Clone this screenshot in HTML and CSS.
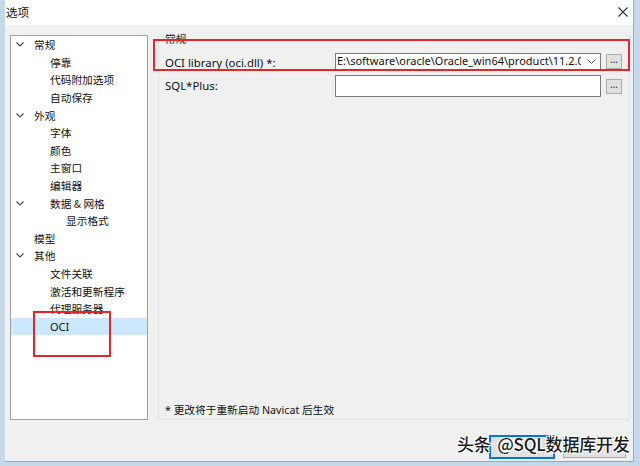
FILE: index.html
```html
<!DOCTYPE html>
<html lang="zh">
<head>
<meta charset="utf-8">
<link rel="stylesheet" href="styles.css">
</head>
<body>
<div class="desk">
  <div class="window">
    <div class="titlebar">
      <span class="title">选项</span>
      <svg class="close" width="10" height="10" viewBox="0 0 10 10"><path d="M0.5 0.5 L9.5 9.5 M9.5 0.5 L0.5 9.5" stroke="#333" stroke-width="1.1" fill="none"/></svg>
    </div>
    <div class="main">
      <div class="tree">
        <div class="row l1"><svg class="chev" width="8" height="5" viewBox="0 0 8 5"><path d="M0.5 0.5 L4 4 L7.5 0.5" stroke="#444" stroke-width="1.1" fill="none"/></svg>常规</div>
        <div class="row l2">停靠</div>
        <div class="row l2">代码附加选项</div>
        <div class="row l2">自动保存</div>
        <div class="row l1"><svg class="chev" width="8" height="5" viewBox="0 0 8 5"><path d="M0.5 0.5 L4 4 L7.5 0.5" stroke="#444" stroke-width="1.1" fill="none"/></svg>外观</div>
        <div class="row l2">字体</div>
        <div class="row l2">颜色</div>
        <div class="row l2">主窗口</div>
        <div class="row l2">编辑器</div>
        <div class="row l2"><svg class="chev" width="8" height="5" viewBox="0 0 8 5"><path d="M0.5 0.5 L4 4 L7.5 0.5" stroke="#444" stroke-width="1.1" fill="none"/></svg>数据 &amp; 网格</div>
        <div class="row l3">显示格式</div>
        <div class="row l1">模型</div>
        <div class="row l1"><svg class="chev" width="8" height="5" viewBox="0 0 8 5"><path d="M0.5 0.5 L4 4 L7.5 0.5" stroke="#444" stroke-width="1.1" fill="none"/></svg>其他</div>
        <div class="row l2">文件关联</div>
        <div class="row l2">激活和更新程序</div>
        <div class="row l2">代理服务器</div>
        <div class="row l2 sel">OCI</div>
      </div>
      <div class="panel">
        <div class="group">常规</div>
        <div class="form">
          <div class="lbl">OCI library (oci.dll) *:</div>
          <div class="combo"><span class="val">E:\software\oracle\Oracle_win64\product\11.2.0\</span><svg class="dd" width="9" height="5" viewBox="0 0 9 5"><path d="M0.5 0.5 L4.5 4.5 L8.5 0.5" stroke="#555" stroke-width="1" fill="none"/></svg></div>
          <div class="dots b1">...</div>
          <div class="lbl l2nd">SQL*Plus:</div>
          <div class="input"></div>
          <div class="dots b2">...</div>
        </div>
        <div class="note">* 更改将于重新启动 Navicat 后生效</div>
      </div>
    </div>
    <div class="footer">
      <div class="btn ok"></div>
      <div class="btn cancel"></div>
    </div>
  </div>
  <div class="mark mark1"></div>
  <div class="mark mark2"></div>
  <div class="wm">头条 @SQL数据库开发</div>
</div>
</body>
</html>
```
FILE: styles.css
```css
html, body {
  margin: 0;
  padding: 0;
  width: 640px;
  height: 466px;
  overflow: hidden;
  background: #c4d8ea;
  font-family: "Noto Sans", "Noto Sans CJK SC", sans-serif;
  color: #111;
}
.desk {
  position: relative;
  width: 640px;
  height: 466px;
  padding-left: 5px;
  box-sizing: border-box;
}
.window {
  width: 629px;
  height: 462px;
  background: #f0f0f0;
  border-right: 1px solid #9aa7b4;
  border-bottom: 1px solid #9aa7b4;
  box-sizing: border-box;
  display: flex;
  flex-direction: column;
}
.titlebar {
  height: 23px;
  background: #fff;
  display: flex;
  align-items: center;
  justify-content: space-between;
  padding: 0 5px 2px 1px;
  flex: none;
}
.title {
  font-size: 11.5px;
  font-family: "Noto Sans CJK SC", sans-serif;
}
.main {
  display: flex;
  gap: 10px;
  padding: 10px 3px 0 5px;
  height: 385px;
  flex: none;
}
.tree {
  width: 138px;
  background: #fff;
  border: 1px solid #a0a0a0;
  box-sizing: border-box;
  padding-top: 0;
  flex: none;
}
.row {
  height: 17.6px;
  display: flex;
  align-items: center;
  font-size: 10.7px;
  font-family: "Noto Sans CJK SC", sans-serif;
  color: #111;
}
.row.l1 { padding-left: 23px; }
.row.l2 { padding-left: 39px; }
.row.l3 { padding-left: 55px; }
.row .chev {
  margin-left: -18px;
  margin-right: 10px;
}
.row.l2 .chev { margin-left: -34px; margin-right: 26px; }
.row.sel {
  background: #cce8ff;
  font-family: "Noto Sans", sans-serif;
  font-size: 11px;
}
.panel {
  flex: 1;
  border: 1px solid #e2e2e2;
  border-top-color: #f0f0f0;
  display: flex;
  flex-direction: column;
  padding: 0 7px 2px 6px;
  box-sizing: border-box;
}
.group {
  font-size: 10.7px;
  font-family: "Noto Sans CJK SC", sans-serif;
  line-height: 14px;
  margin-top: -4px;
  color: #222;
}
.form {
  display: grid;
  grid-template-columns: 165px 266px 16px;
  grid-template-rows: 16px 22px;
  column-gap: 5px;
  row-gap: 6px;
  margin-top: 7px;
  align-items: center;
}
.lbl {
  font-size: 11.4px;
  color: #111;
  align-self: end;
  line-height: 14px;
  margin-bottom: -1px;
}
.lbl.l2nd { align-self: center; margin-bottom: 0; }
.combo, .input {
  background: #fff;
  border: 1px solid #7a7a7a;
  box-sizing: border-box;
  height: 100%;
}
.combo {
  display: flex;
  align-items: center;
  padding: 0 4px 0 1px;
  overflow: hidden;
  height: 17px;
}
.val {
  flex: 1;
  white-space: nowrap;
  overflow: hidden;
  font-size: 11px;
  line-height: 14px;
}
.dd { flex: none; margin-left: 6px; }
.dots {
  background: #e1e1e1;
  border: 1px solid #adadad;
  box-sizing: border-box;
  height: 15px;
  font-size: 10px;
  line-height: 9px;
  text-align: center;
  color: #222;
}
.note {
  margin-top: auto;
  font-size: 10.7px;
  font-family: "Noto Sans", "Noto Sans CJK SC", sans-serif;
  line-height: 14px;
  color: #111;
}
.footer {
  flex: 1;
  display: flex;
  justify-content: flex-end;
  align-items: flex-start;
  gap: 8px;
  padding: 15px 7px 0 0;
}
.btn {
  box-sizing: border-box;
  background: #e1e1e1;
  border: 1px solid #adadad;
}
.btn.ok {
  width: 66px;
  height: 24px;
  border: 2px solid #0078d7;
}
.btn.cancel {
  width: 63px;
  height: 21px;
  margin-top: 2px;
}
.mark {
  position: absolute;
  border: 2px solid #e3262b;
  box-sizing: border-box;
}
.mark1 { left: 153px; top: 39px; width: 477px; height: 32px; }
.mark2 { left: 33px; top: 311px; width: 78px; height: 46px; }
.wm {
  position: absolute;
  left: 457px;
  top: 433px;
  font-size: 17px;
  line-height: 22px;
  font-weight: 500;
  font-family: "Noto Sans CJK SC", sans-serif;
  color: #1c1c1c;
  letter-spacing: -0.2px;
  word-spacing: 3px;
  text-shadow: 1px 1px 0 #fff, -1px -1px 0 #fff, 1px -1px 0 #fff, -1px 1px 0 #fff;
}
.close { flex: none; }
```
